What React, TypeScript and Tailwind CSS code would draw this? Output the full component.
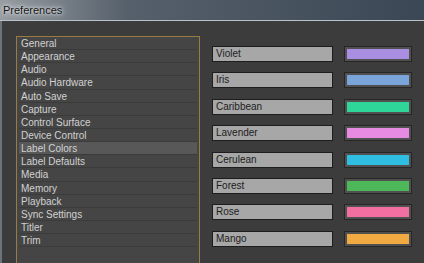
const sections = [
  "General",
  "Appearance",
  "Audio",
  "Audio Hardware",
  "Auto Save",
  "Capture",
  "Control Surface",
  "Device Control",
  "Label Colors",
  "Label Defaults",
  "Media",
  "Memory",
  "Playback",
  "Sync Settings",
  "Titler",
  "Trim",
];

const labels = [
  { name: "Violet", color: "bg-[#a98ee2]" },
  { name: "Iris", color: "bg-[#7aa4da]" },
  { name: "Caribbean", color: "bg-[#2fd69a]" },
  { name: "Lavender", color: "bg-[#e68ae2]" },
  { name: "Cerulean", color: "bg-[#30bde2]" },
  { name: "Forest", color: "bg-[#4db75a]" },
  { name: "Rose", color: "bg-[#f26fa2]" },
  { name: "Mango", color: "bg-[#f1a942]" },
];

export default function App() {
  return (
    <div className="w-[424px] h-[263px] overflow-hidden flex flex-col bg-[#3c3c3c] font-['Liberation_Sans',Arial,sans-serif]">
      {/* title bar */}
      <div className="h-[21px] shrink-0 border-b border-[#b9c2cb] bg-gradient-to-r from-[#979da2] via-[#56606b] via-30% to-[#3b4755] flex items-center pl-[3px]">
        <span className="text-[11px] text-[#151515] [text-shadow:0_0_7px_#eef1f3,0_0_3px_#eef1f3]">
          Preferences
        </span>
      </div>

      <div className="flex-1 flex border-l-2 border-[#6c737b] pl-[14px] pt-[15px]">
        {/* section list */}
        <div className="w-[184px] h-[240px] shrink-0 border border-[#9a7b42] bg-[#454545] px-[2px]">
          {sections.map((s) => (
            <div
              key={s}
              className={`h-[13.15px] border-b border-[#3b3b3b] pl-[2px] pt-[1px] text-[10px] leading-[12px] text-[#d2d2d2] ${
                s === "Label Colors" ? "bg-[#585858]" : ""
              }`}
            >
              {s}
            </div>
          ))}
        </div>

        {/* label colors */}
        <div className="ml-[12px] mt-[10px] flex flex-col gap-[10.4px]">
          {labels.map((l) => (
            <div key={l.name} className="flex items-center gap-[11px]">
              <div className="w-[121px] h-[16px] border border-[#1d1d1d] bg-[#a7a7a7] pl-[3px] text-[10px] leading-[14px] text-[#1c1c1c]">
                {l.name}
              </div>
              <div className="w-[68px] h-[16px] border border-[#262626] bg-[#505050] p-[2px]">
                <div className={`w-full h-full ${l.color}`} />
              </div>
            </div>
          ))}
        </div>
      </div>
    </div>
  );
}
